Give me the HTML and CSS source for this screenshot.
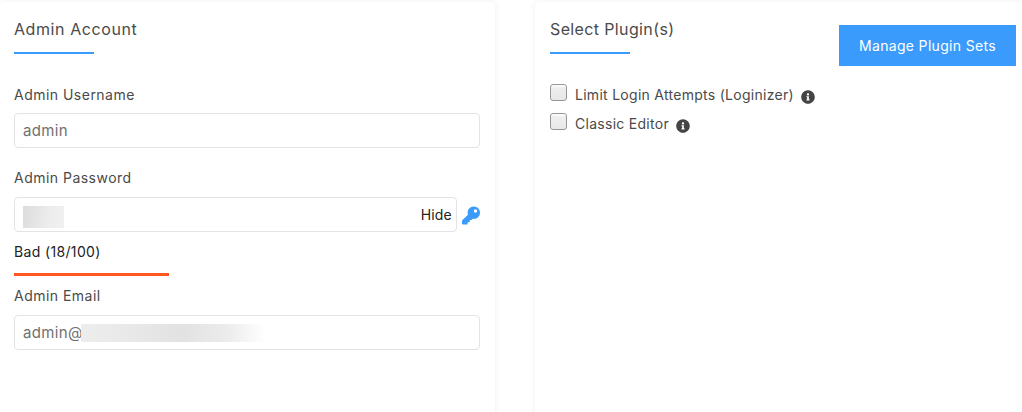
FILE: index.html
```html
<!DOCTYPE html>
<html lang="en">
<head>
<meta charset="utf-8">
<title>Admin Account</title>
<link rel="stylesheet" href="styles.css">
</head>
<body>
<main class="columns">
  <section class="card card-left">
    <h2 class="heading heading-account">Admin Account</h2>
    <div class="field field-first">
      <label class="label" for="user">Admin Username</label>
      <input class="input" id="user" type="text" value="admin">
    </div>
    <div class="field field-pass">
      <label class="label" for="pass">Admin Password</label>
      <div class="pass-row">
        <div class="pass-box">
          <input class="input input-pass" id="pass" type="text" value="">
          <span class="blur blur-pass"></span>
          <span class="hide">Hide</span>
        </div>
        <svg class="key" viewBox="0 0 512 512"><path d="M512 176.001C512 273.203 433.202 352 336 352c-11.22 0-22.19-1.062-32.827-3.069l-24.012 27.014A23.999 23.999 0 0 1 261.223 384H224v40c0 13.255-10.745 24-24 24h-40v40c0 13.255-10.745 24-24 24H24c-13.255 0-24-10.745-24-24v-78.059c0-6.365 2.529-12.47 7.029-16.971l161.802-161.802C163.108 213.814 160 195.271 160 176 160 78.798 238.797.001 335.999 0 433.488-.001 512 78.511 512 176.001zM336 128c0 26.51 21.49 48 48 48s48-21.49 48-48-21.49-48-48-48-48 21.49-48 48z"/></svg>
      </div>
      <div class="strength">Bad (18/100)</div>
      <div class="strength-bar"></div>
    </div>
    <div class="field field-email">
      <label class="label" for="email">Admin Email</label>
      <div class="email-box">
        <input class="input" id="email" type="text" value="admin@">
        <span class="blur blur-email"></span>
      </div>
    </div>
  </section>
  <section class="card card-right">
    <div class="top-row">
      <h2 class="heading heading-plugins">Select Plugin(s)</h2>
      <button class="btn" type="button">Manage Plugin Sets</button>
    </div>
    <ul class="plugins">
      <li class="plugin">
        <input class="check" type="checkbox" id="p1">
        <label class="plugin-name" for="p1">Limit Login Attempts (Loginizer)</label>
        <svg class="info" viewBox="0 0 512 512"><path d="M256 8C119.043 8 8 119.083 8 256c0 136.997 111.043 248 248 248s248-111.003 248-248C504 119.083 392.957 8 256 8zm0 110c23.196 0 42 18.804 42 42s-18.804 42-42 42-42-18.804-42-42 18.804-42 42-42zm56 254c0 6.627-5.373 12-12 12h-88c-6.627 0-12-5.373-12-12v-24c0-6.627 5.373-12 12-12h12v-64h-12c-6.627 0-12-5.373-12-12v-24c0-6.627 5.373-12 12-12h64c6.627 0 12 5.373 12 12v100h12c6.627 0 12 5.373 12 12v24z"/></svg>
      </li>
      <li class="plugin">
        <input class="check" type="checkbox" id="p2">
        <label class="plugin-name" for="p2">Classic Editor</label>
        <svg class="info" viewBox="0 0 512 512"><path d="M256 8C119.043 8 8 119.083 8 256c0 136.997 111.043 248 248 248s248-111.003 248-248C504 119.083 392.957 8 256 8zm0 110c23.196 0 42 18.804 42 42s-18.804 42-42 42-42-18.804-42-42 18.804-42 42-42zm56 254c0 6.627-5.373 12-12 12h-88c-6.627 0-12-5.373-12-12v-24c0-6.627 5.373-12 12-12h12v-64h-12c-6.627 0-12-5.373-12-12v-24c0-6.627 5.373-12 12-12h64c6.627 0 12 5.373 12 12v100h12c6.627 0 12 5.373 12 12v24z"/></svg>
      </li>
    </ul>
  </section>
</main>
</body>
</html>
```
FILE: styles.css
```css
* { box-sizing: border-box; }
html, body { height: 100%; }
body {
  margin: 0;
  background: #fff;
  color: #4a4a4a;
  font-family: "Inter", "Liberation Sans", sans-serif;
  font-size: 14px;
  overflow: hidden;
}
.columns {
  display: flex;
  gap: 40px;
  height: 412px;
  padding-top: 2px;
}
.card {
  background: #fff;
  border-radius: 4px 4px 0 0;
  box-shadow: 0 0 6px rgba(0, 0, 0, 0.07);
  height: 430px;
}
.card-left {
  width: 495px;
  flex: none;
  padding: 16px 15px 0 14px;
}
.card-right {
  flex: 1;
  padding: 16px 6px 0 15px;
}
.heading {
  margin: 0;
  width: 80px;
  white-space: nowrap;
  font-size: 16px;
  font-weight: 400;
  line-height: 22px;
  height: 36px;
  color: #4a4a4a;
  border-bottom: 2px solid #3a9bfd;
}
.heading-account { letter-spacing: 0.58px; }
.heading-plugins { letter-spacing: 0.37px; }
.field-first { margin-top: 31px; }
.field-pass { margin-top: 20px; }
.field-email { margin-top: 10px; }
.label {
  display: block;
  line-height: 20px;
  height: 28px;
  letter-spacing: 0.48px;
}
.field-email .label { height: 29px; }
.input {
  display: block;
  width: 466px;
  height: 35px;
  padding: 0 8px;
  border: 1px solid #e3e3e3;
  border-radius: 4px;
  background: #fff;
  color: #707070;
  font: inherit;
  font-size: 15px;
  letter-spacing: 0.35px;
  outline: none;
}
.field-pass .label { height: 29px; }
.pass-row {
  display: flex;
  align-items: center;
  gap: 5px;
}
.pass-box, .email-box { position: relative; }
.input-pass { width: 443px; }
.blur { position: absolute; display: block; }
.blur-pass {
  left: 9px;
  top: 9px;
  width: 41px;
  height: 22px;
  background: linear-gradient(100deg, #dcdcdc, #ececec 60%, #f0f0f0);
}
.blur-email {
  left: 67px;
  top: 9px;
  width: 184px;
  height: 18px;
  background: linear-gradient(90deg, #ededed, #e9e9e9 25%, #e2e2e2 55%, #ececec 80%, #fff);
}
.hide {
  position: absolute;
  right: 5px;
  top: 8px;
  line-height: 20px;
  color: #222;
  letter-spacing: 0.2px;
}
.key { width: 19px; height: 19px; margin-top: 1px; fill: #3a9bfd; }
.strength {
  margin-top: 10px;
  line-height: 20px;
  color: #222;
  letter-spacing: 0.35px;
}
.strength-bar {
  width: 155px;
  height: 3px;
  margin-top: 11px;
  background: #ff5722;
}
.top-row {
  display: flex;
  justify-content: space-between;
  align-items: flex-start;
}
.btn {
  width: 177px;
  height: 41px;
  margin-top: 7px;
  border: 0;
  padding: 0;
  background: #3a9bfd;
  color: #fff;
  font: inherit;
  letter-spacing: 0.33px;
}
.plugins {
  list-style: none;
  margin: 0;
  padding: 0;
  margin-top: 18px;
}
.plugin {
  display: flex;
  align-items: flex-start;
  height: 29px;
}
.check {
  appearance: none;
  width: 17px;
  height: 17px;
  margin: 0 8px 0 0;
  border: 1px solid #969696;
  border-radius: 3px;
  background: linear-gradient(#fff, #eee 20%, #e8e8e8);
}
.plugin-name { line-height: 20px; margin-top: 1px; letter-spacing: 0.28px; }
.info {
  width: 14px;
  height: 14px;
  margin: 6px 0 0 7px;
  fill: #444;
}
```
